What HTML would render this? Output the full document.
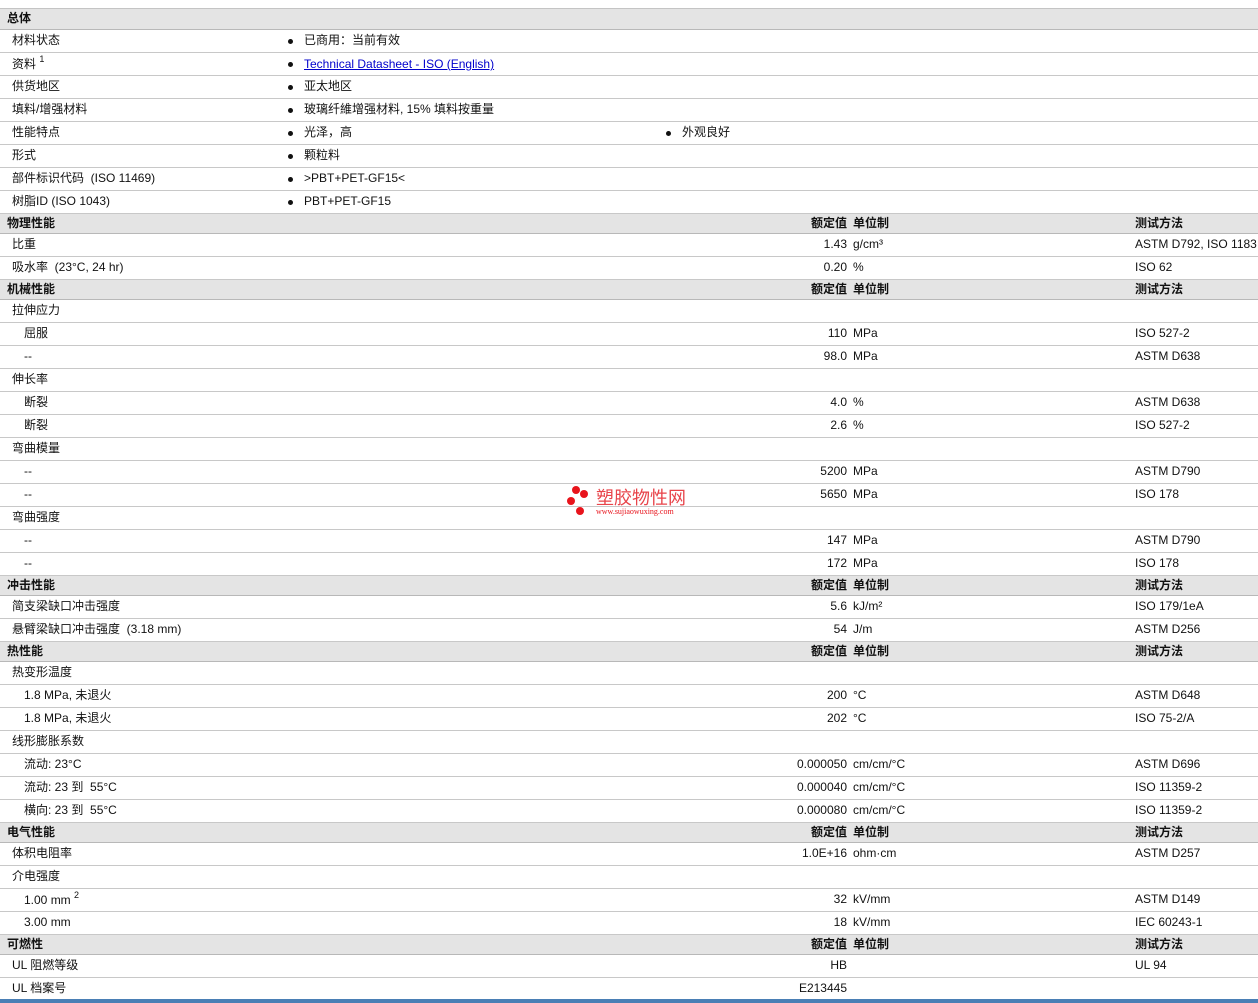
<!DOCTYPE html><html><head><meta charset="utf-8"><style>
body{margin:0;width:1258px;height:1003px;overflow:hidden;background:#fff;font-family:"Liberation Sans","Noto Sans CJK SC",sans-serif;font-size:12px;color:#111}
#w{position:absolute;top:8px;left:0;width:1258px;border-top:1px solid #c4c4c4}
.r{height:22px;border-bottom:1px solid #c8c8c8;position:relative;line-height:20px}
.h{height:19px;border-bottom:1px solid #b8b8b8;background:#e4e4e4;position:relative;line-height:19px;font-weight:bold}
.r span,.h span{position:absolute;top:0;white-space:nowrap}
.l{left:12px}.l2{left:24px}.hl{left:7px}
.v{right:411px;text-align:right}.u{left:853px}.m{left:1135px}
.b{left:304px}.b2{left:682px}
.d{position:absolute;width:5px;height:5px;border-radius:50%;background:#111;top:9px}
a{color:#00c;text-decoration:underline}
sup{font-size:9px;vertical-align:baseline;position:relative;top:-6px;line-height:0}
#f{position:absolute;top:999px;left:0;width:1258px;height:4px;background:#4a7fb5}
#wm{position:absolute;left:566px;top:484px;width:130px;height:36px}
</style></head><body>
<div id="w">
<div class="h" style="height:20px"><span class="hl">总体</span></div>
<div class="r"><span class="l">材料状态</span><i class="d" style="left:288px"></i><span class="b">已商用：当前有效</span></div>
<div class="r"><span class="l" style="top:1px">资料 <sup>1</sup></span><i class="d" style="left:288px"></i><span class="b" style="top:1px"><a>Technical Datasheet - ISO (English)</a></span></div>
<div class="r"><span class="l">供货地区</span><i class="d" style="left:288px"></i><span class="b">亚太地区</span></div>
<div class="r"><span class="l">填料/增强材料</span><i class="d" style="left:288px"></i><span class="b">玻璃纤維增强材料, 15% 填料按重量</span></div>
<div class="r"><span class="l">性能特点</span><i class="d" style="left:288px"></i><span class="b">光泽，高</span><i class="d" style="left:666px"></i><span class="b2">外观良好</span></div>
<div class="r"><span class="l">形式</span><i class="d" style="left:288px"></i><span class="b">颗粒料</span></div>
<div class="r"><span class="l">部件标识代码&nbsp; (ISO 11469)</span><i class="d" style="left:288px"></i><span class="b">&gt;PBT+PET-GF15&lt;</span></div>
<div class="r"><span class="l">树脂ID (ISO 1043)</span><i class="d" style="left:288px"></i><span class="b">PBT+PET-GF15</span></div>
<div class="h"><span class="hl">物理性能</span><span class="v">额定值</span><span class="u">单位制</span><span class="m">测试方法</span></div>
<div class="r"><span class="l">比重</span><span class="v">1.43</span><span class="u">g/cm³</span><span class="m">ASTM D792, ISO 1183</span></div>
<div class="r"><span class="l">吸水率&nbsp; (23°C, 24 hr)</span><span class="v">0.20</span><span class="u">%</span><span class="m">ISO 62</span></div>
<div class="h"><span class="hl">机械性能</span><span class="v">额定值</span><span class="u">单位制</span><span class="m">测试方法</span></div>
<div class="r"><span class="l">拉伸应力</span></div>
<div class="r"><span class="l2">屈服</span><span class="v">110</span><span class="u">MPa</span><span class="m">ISO 527-2</span></div>
<div class="r"><span class="l2">--</span><span class="v">98.0</span><span class="u">MPa</span><span class="m">ASTM D638</span></div>
<div class="r"><span class="l">伸长率</span></div>
<div class="r"><span class="l2">断裂</span><span class="v">4.0</span><span class="u">%</span><span class="m">ASTM D638</span></div>
<div class="r"><span class="l2">断裂</span><span class="v">2.6</span><span class="u">%</span><span class="m">ISO 527-2</span></div>
<div class="r"><span class="l">弯曲模量</span></div>
<div class="r"><span class="l2">--</span><span class="v">5200</span><span class="u">MPa</span><span class="m">ASTM D790</span></div>
<div class="r"><span class="l2">--</span><span class="v">5650</span><span class="u">MPa</span><span class="m">ISO 178</span></div>
<div class="r"><span class="l">弯曲强度</span></div>
<div class="r"><span class="l2">--</span><span class="v">147</span><span class="u">MPa</span><span class="m">ASTM D790</span></div>
<div class="r"><span class="l2">--</span><span class="v">172</span><span class="u">MPa</span><span class="m">ISO 178</span></div>
<div class="h"><span class="hl">冲击性能</span><span class="v">额定值</span><span class="u">单位制</span><span class="m">测试方法</span></div>
<div class="r"><span class="l">简支梁缺口冲击强度</span><span class="v">5.6</span><span class="u">kJ/m²</span><span class="m">ISO 179/1eA</span></div>
<div class="r"><span class="l">悬臂梁缺口冲击强度&nbsp; (3.18 mm)</span><span class="v">54</span><span class="u">J/m</span><span class="m">ASTM D256</span></div>
<div class="h"><span class="hl">热性能</span><span class="v">额定值</span><span class="u">单位制</span><span class="m">测试方法</span></div>
<div class="r"><span class="l">热变形温度</span></div>
<div class="r"><span class="l2">1.8 MPa, 未退火</span><span class="v">200</span><span class="u">°C</span><span class="m">ASTM D648</span></div>
<div class="r"><span class="l2">1.8 MPa, 未退火</span><span class="v">202</span><span class="u">°C</span><span class="m">ISO 75-2/A</span></div>
<div class="r"><span class="l">线形膨胀系数</span></div>
<div class="r"><span class="l2">流动: 23°C</span><span class="v">0.000050</span><span class="u">cm/cm/°C</span><span class="m">ASTM D696</span></div>
<div class="r"><span class="l2">流动: 23 到&nbsp; 55°C</span><span class="v">0.000040</span><span class="u">cm/cm/°C</span><span class="m">ISO 11359-2</span></div>
<div class="r"><span class="l2">横向: 23 到&nbsp; 55°C</span><span class="v">0.000080</span><span class="u">cm/cm/°C</span><span class="m">ISO 11359-2</span></div>
<div class="h"><span class="hl">电气性能</span><span class="v">额定值</span><span class="u">单位制</span><span class="m">测试方法</span></div>
<div class="r"><span class="l">体积电阻率</span><span class="v">1.0E+16</span><span class="u">ohm·cm</span><span class="m">ASTM D257</span></div>
<div class="r"><span class="l">介电强度</span></div>
<div class="r"><span class="l2" style="top:1px">1.00 mm <sup>2</sup></span><span class="v">32</span><span class="u">kV/mm</span><span class="m">ASTM D149</span></div>
<div class="r"><span class="l2">3.00 mm</span><span class="v">18</span><span class="u">kV/mm</span><span class="m">IEC 60243-1</span></div>
<div class="h"><span class="hl">可燃性</span><span class="v">额定值</span><span class="u">单位制</span><span class="m">测试方法</span></div>
<div class="r"><span class="l">UL 阻燃等级</span><span class="v">HB</span><span class="m">UL 94</span></div>
<div class="r"><span class="l">UL 档案号</span><span class="v">E213445</span></div>
</div>
<div id="wm">
<i style="position:absolute;left:6px;top:2px;width:8px;height:8px;border-radius:50%;background:#e8141c"></i>
<i style="position:absolute;left:14px;top:6px;width:8px;height:8px;border-radius:50%;background:#e8141c"></i>
<i style="position:absolute;left:1px;top:13px;width:8px;height:8px;border-radius:50%;background:#e8141c"></i>
<i style="position:absolute;left:10px;top:23px;width:8px;height:8px;border-radius:50%;background:#e8141c"></i>
<span style="position:absolute;left:30px;top:3px;font-size:18px;color:#e8444a;white-space:nowrap;font-family:'Noto Sans CJK SC',sans-serif;line-height:20px">塑胶物性网</span>
<span style="position:absolute;left:30px;top:23px;font-size:8px;color:#e8141c;white-space:nowrap;font-family:'Liberation Serif',serif">www.sujiaowuxing.com</span>
</div>
<div id="f"></div>
</body></html>
